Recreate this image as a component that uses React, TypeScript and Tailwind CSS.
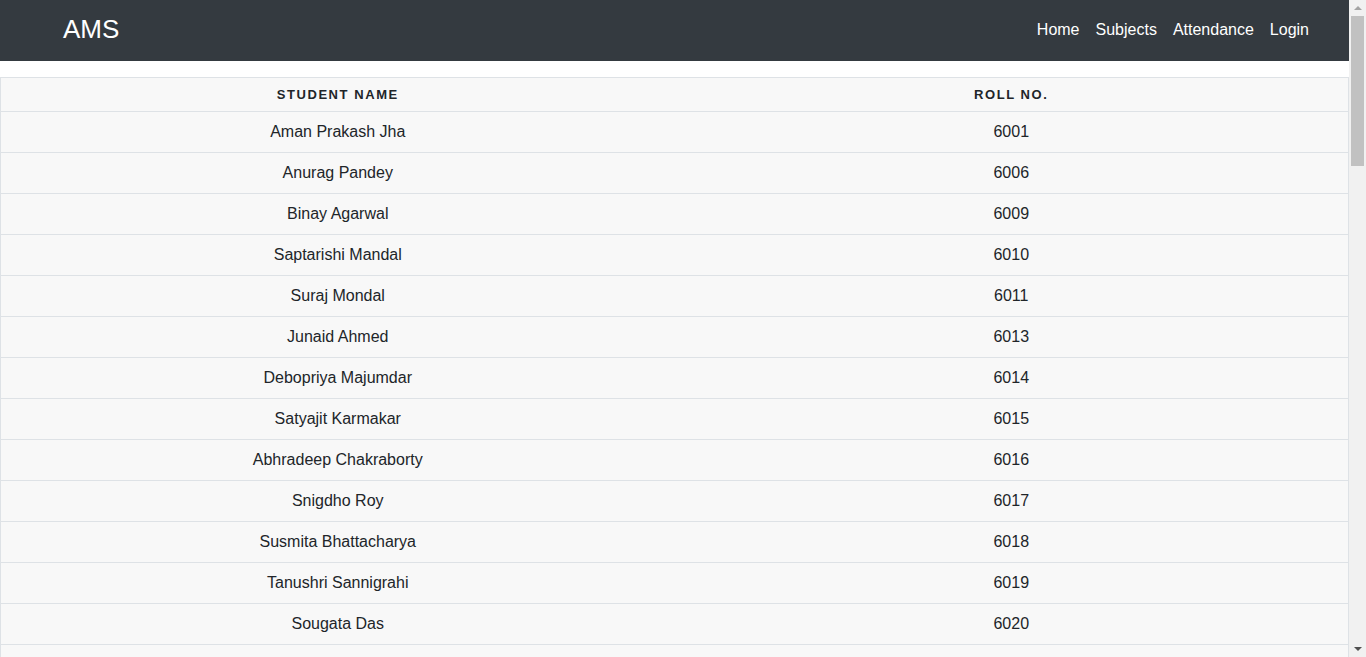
const students: [string, number][] = [
  ["Aman Prakash Jha", 6001],
  ["Anurag Pandey", 6006],
  ["Binay Agarwal", 6009],
  ["Saptarishi Mandal", 6010],
  ["Suraj Mondal", 6011],
  ["Junaid Ahmed", 6013],
  ["Debopriya Majumdar", 6014],
  ["Satyajit Karmakar", 6015],
  ["Abhradeep Chakraborty", 6016],
  ["Snigdho Roy", 6017],
  ["Susmita Bhattacharya", 6018],
  ["Tanushri Sannigrahi", 6019],
  ["Sougata Das", 6020],
  ["Rahul Sharma", 6021],
  ["Priya Sen", 6022],
  ["Arnab Ghosh", 6023],
];

// classic browser scrollbar, as seen on the screenshot
function ScrollBar() {
  return (
    <div className="fixed top-0 right-0 h-screen w-[17px] bg-[#f1f1f1] flex flex-col items-center">
      <div className="h-[16px] flex items-center justify-center">
        <div className="w-0 h-0 border-l-[4px] border-r-[4px] border-b-[4px] border-l-transparent border-r-transparent border-b-[#a3a3a3]" />
      </div>
      <div className="w-[13px] h-[150px] bg-[#c1c1c1]" />
      <div className="flex-1" />
      <div className="h-[16px] flex items-center justify-center">
        <div className="w-0 h-0 border-l-[4px] border-r-[4px] border-t-[4px] border-l-transparent border-r-transparent border-t-[#505050]" />
      </div>
    </div>
  );
}

export default function App() {
  return (
    <div className="min-h-screen bg-white pr-[17px] font-['Liberation_Sans',Arial,sans-serif] text-[#212529]">
      <nav className="bg-[#343a40] h-[61px] flex items-center justify-between pl-[63px] pr-[40px]">
        <a href="#" className="text-white text-[26px] leading-none -mt-[3px]">AMS</a>
        <div className="flex gap-4 text-white text-[16px] -mt-[2px] pl-[1px]">
          <a href="#">Home</a>
          <a href="#">Subjects</a>
          <a href="#">Attendance</a>
          <a href="#">Login</a>
        </div>
      </nav>
      <div className="pt-4">
        <table className="w-full border-collapse border border-[#dee2e6] bg-[#f8f8f8]">
          <thead>
            <tr className="h-[34px] border-b border-[#dee2e6]">
              <th className="w-1/2 text-[13px] font-bold tracking-[0.12em] uppercase">Student Name</th>
              <th className="w-1/2 text-[13px] font-bold tracking-[0.12em] uppercase">Roll No.</th>
            </tr>
          </thead>
          <tbody>
            {students.map(([name, roll]) => (
              <tr key={roll} className="h-[41px] border-b border-[#dee2e6] text-[16px]">
                <td className="text-center">{name}</td>
                <td className="text-center">{roll}</td>
              </tr>
            ))}
          </tbody>
        </table>
      </div>
      <ScrollBar />
    </div>
  );
}
